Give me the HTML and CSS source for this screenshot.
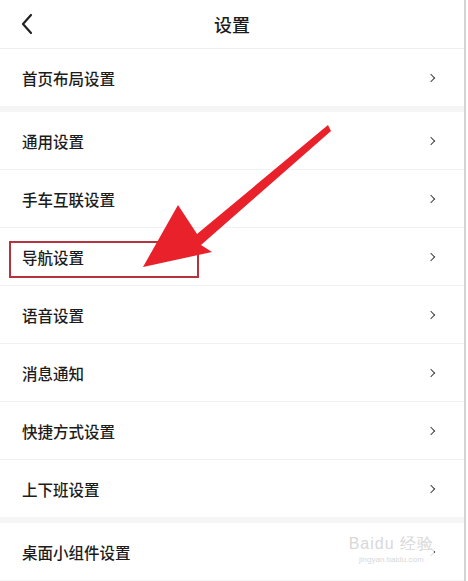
FILE: index.html
```html
<!DOCTYPE html>
<html>
<head>
  <title>设置</title>
  <link rel="stylesheet" href="styles.css">
</head>
<body>
  <div class="page">
    <div class="header">
      <svg class="back" width="14" height="22" viewBox="0 0 14 22">
        <path d="M11 2 L3 11 L11 20" fill="none" stroke="#222" stroke-width="2.2" stroke-linecap="round" stroke-linejoin="round"/>
      </svg>
      <h1>设置</h1>
    </div>

    <div class="group">
      <div class="item"><span>首页布局设置</span><i class="chev"></i></div>
    </div>

    <div class="group">
      <div class="item"><span>通用设置</span><i class="chev"></i></div>
      <div class="item"><span>手车互联设置</span><i class="chev"></i></div>
      <div class="item"><span>导航设置</span><i class="chev"></i></div>
      <div class="item"><span>语音设置</span><i class="chev"></i></div>
      <div class="item"><span>消息通知</span><i class="chev"></i></div>
      <div class="item"><span>快捷方式设置</span><i class="chev"></i></div>
      <div class="item"><span>上下班设置</span><i class="chev"></i></div>
    </div>

    <div class="group">
      <div class="item"><span>桌面小组件设置</span><i class="chev"></i></div>
    </div>

    <div class="highlight"></div>
    <svg class="arrow" width="468" height="581" viewBox="0 0 468 581">
      <polygon points="328,125 197,234 178,205 143,267 212,252 201,245 331,131" fill="#e8212b"/>
    </svg>
    <div class="watermark">
      <div class="wm-logo">Bai<span>du</span> 经验</div>
      <div class="wm-url">jingyan.baidu.com</div>
    </div>
  </div>
</body>
</html>
```

FILE: styles.css
```css
body {
  margin: 0;
  padding: 0;
  background: #fff;
  font-family: "Noto Sans CJK SC", "Noto Sans", sans-serif;
  color: #1c1c1c;
}

.page {
  position: relative;
  width: 464px;
  height: 581px;
  overflow: hidden;
  border-right: 2px solid #d4d4d4;
  background: #f5f5f5;
}

.header {
  height: 48px;
  display: flex;
  align-items: center;
  justify-content: center;
  background: #fff;
  border-bottom: 1px solid #eeeeee;
  position: relative;
}

.header .back {
  position: absolute;
  left: 20px;
  top: 13px;
}

.header h1 {
  margin: 0;
  font-size: 18px;
  font-weight: 500;
  color: #1c1c1c;
}

.group {
  background: #fff;
  margin-bottom: 6px;
}

.item {
  height: 57px;
  display: flex;
  align-items: center;
  justify-content: space-between;
  padding: 0 30px 0 22px;
  border-bottom: 1px solid #f0f0f0;
  font-size: 15.5px;
  font-weight: 500;
}

.group .item:last-child {
  border-bottom: none;
}

.chev {
  width: 5px;
  height: 5px;
  border-top: 1.6px solid #444;
  border-right: 1.6px solid #444;
  transform: rotate(45deg);
}

.highlight {
  position: absolute;
  left: 9px;
  top: 241px;
  width: 186px;
  height: 33px;
  border: 2px solid #b5333d;
}

.arrow {
  position: absolute;
  left: 0;
  top: 0;
}

.watermark {
  position: absolute;
  right: 30px;
  top: 534px;
  color: #d8d8d8;
  text-align: center;
  font-family: "Liberation Sans", sans-serif;
  background: rgba(255, 255, 255, 0.8);
}

.wm-logo {
  font-size: 16px;
  letter-spacing: 1px;
}

.wm-url {
  font-size: 8px;
}
```
